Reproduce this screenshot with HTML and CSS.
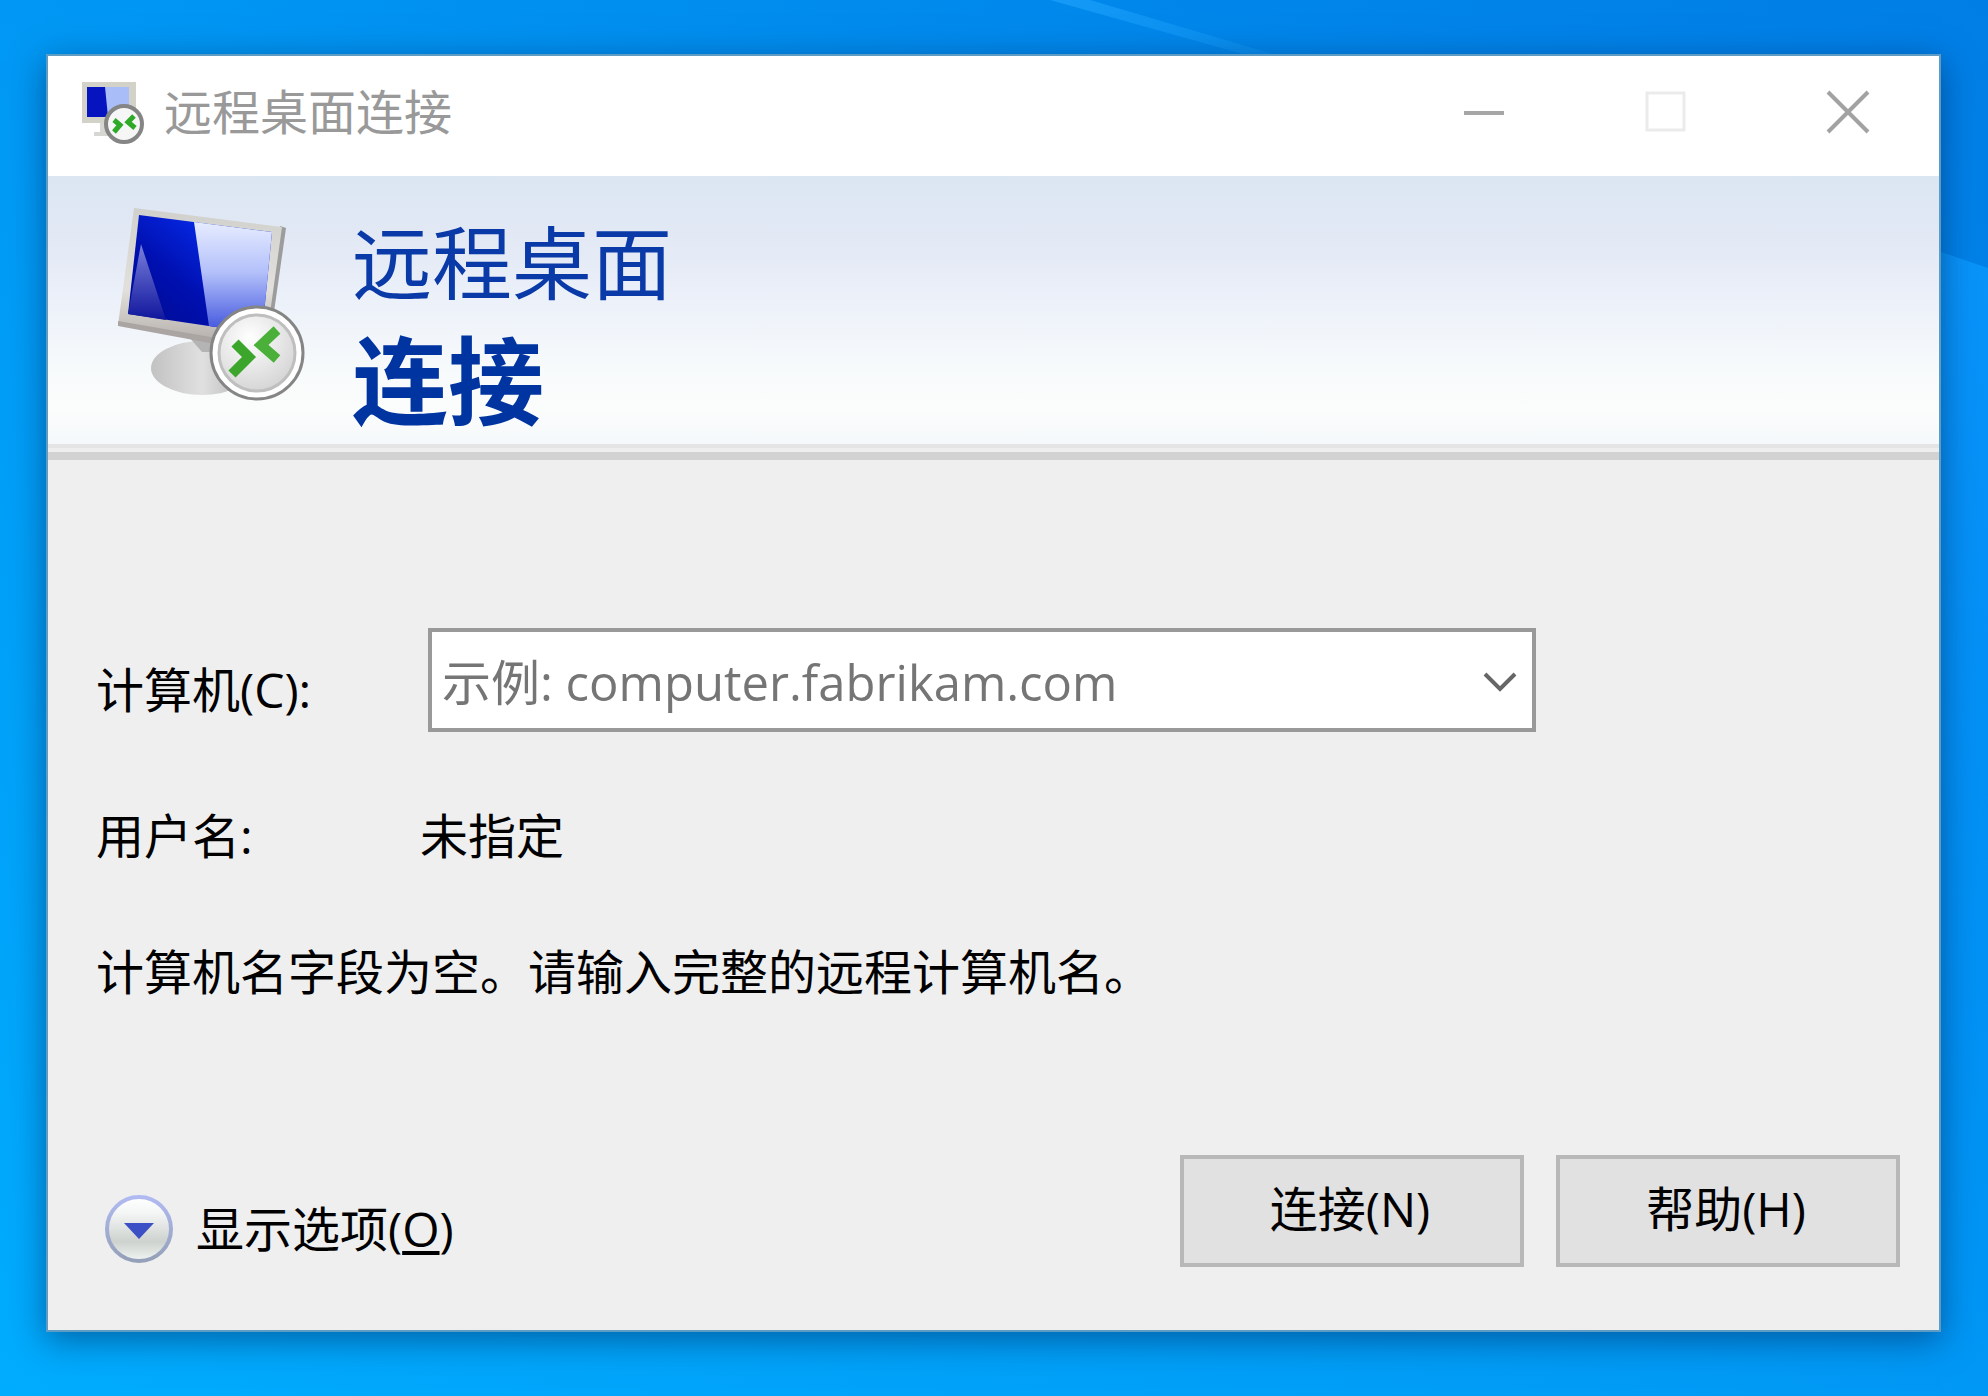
FILE: index.html
```html
<!DOCTYPE html>
<html lang="zh-CN">

<head>
    <meta charset="UTF-8">
    <meta name="viewport" content="width=device-width,initial-scale=1.0">
    <title>远程桌面连接</title>
    <link rel="stylesheet" href="styles.css">
</head>

<body>
    <!-- 桌面壁纸 -->
    <svg class="wallpaper" viewBox="0 0 1988 1396" preserveAspectRatio="none" aria-hidden="true">
        <defs>
            <linearGradient id="sky" x1="0" y1="1" x2="1" y2="0">
                <stop offset="0" stop-color="#00acfe" />
                <stop offset="0.5" stop-color="#0098f4" />
                <stop offset="0.8" stop-color="#0086ea" />
                <stop offset="1" stop-color="#007ee6" />
            </linearGradient>
            <linearGradient id="beam" x1="0" y1="0" x2="0" y2="1">
                <stop offset="0" stop-color="#0a96fc" stop-opacity="0.9" />
                <stop offset="1" stop-color="#0096ff" stop-opacity="0.1" />
            </linearGradient>
            <linearGradient id="ray" x1="0" y1="0" x2="1" y2="0">
                <stop offset="0" stop-color="#1ea2fc" stop-opacity="0.7" />
                <stop offset="1" stop-color="#1ea2fc" stop-opacity="0.2" />
            </linearGradient>
        </defs>
        <rect width="1988" height="1396" fill="url(#sky)" />
        <path d="M1900 238L1988 268V1396H1900Z" fill="url(#beam)" />
        <path d="M1050 0h40l190 56h-30z" fill="url(#ray)" />
    </svg>

    <main class="window">
        <!-- 标题栏 -->
        <header class="titlebar">
            <svg class="titlebar_icon" viewBox="0 0 64 64" aria-hidden="true">
                <rect x="2" y="2" width="54" height="41" fill="#d2d2c8" />
                <path d="M20 43h20v7h6v6H14v-4h6z" fill="#d6d6d2" />
                <rect x="7" y="7" width="42" height="30" fill="#a9bdf8" />
                <path d="M7 7h18l3 30H7z" fill="#0614c0" />
                <circle cx="44" cy="44" r="18" fill="#f6f6f6" stroke="#858585" stroke-width="4" />
                <path d="M34 40l6 5-6 7M54 36l-6 6 7 6" fill="none" stroke="#2eaa28" stroke-width="5" />
            </svg>
            <span class="titlebar_text">远程桌面连接</span>
            <div class="titlebar_buttons">
                <button type="button" aria-label="最小化">
                    <svg viewBox="0 0 44 44"><path d="M2 23h40" stroke="#a6a6a6" stroke-width="4" /></svg>
                </button>
                <button type="button" aria-label="最大化" disabled>
                    <svg viewBox="0 0 44 44"><rect x="3" y="3" width="37" height="37" fill="none" stroke="#ebebeb" stroke-width="3" /></svg>
                </button>
                <button type="button" aria-label="关闭">
                    <svg viewBox="0 0 44 44"><path d="M2 2l40 40M42 2L2 42" stroke="#a2a2a2" stroke-width="4" /></svg>
                </button>
            </div>
        </header>

        <!-- 横幅 -->
        <section class="banner">
            <svg class="banner_icon" viewBox="0 0 190 196" aria-hidden="true">
                <defs>
                    <linearGradient id="screen" x1="0" y1="1" x2="1" y2="0">
                        <stop offset="0" stop-color="#000a8c" />
                        <stop offset="0.4" stop-color="#0010b0" />
                        <stop offset="0.7" stop-color="#0526e0" />
                        <stop offset="1" stop-color="#0010a8" />
                    </linearGradient>
                    <linearGradient id="gloss" x1="0" y1="0" x2="0" y2="1">
                        <stop offset="0" stop-color="#e6ecff" />
                        <stop offset="0.45" stop-color="#b3c0fa" />
                        <stop offset="1" stop-color="#3c50dc" />
                    </linearGradient>
                    <linearGradient id="shine" x1="0" y1="0" x2="0" y2="1">
                        <stop offset="0" stop-color="#7a80dc" />
                        <stop offset="1" stop-color="#10169c" />
                    </linearGradient>
                    <linearGradient id="frame" x1="0" y1="0" x2="0" y2="1">
                        <stop offset="0" stop-color="#d0d0cc" />
                        <stop offset="0.6" stop-color="#e2e0dc" />
                        <stop offset="1" stop-color="#b4aeaa" />
                    </linearGradient>
                    <linearGradient id="base" x1="0" y1="0" x2="1" y2="0">
                        <stop offset="0" stop-color="#c2c2c2" />
                        <stop offset="0.5" stop-color="#e0e0e0" />
                        <stop offset="1" stop-color="#b0b0b0" />
                    </linearGradient>
                    <radialGradient id="badge" cx="0.4" cy="0.3" r="0.7">
                        <stop offset="0" stop-color="#ffffff" />
                        <stop offset="1" stop-color="#d6d6d6" />
                    </radialGradient>
                </defs>
                <ellipse cx="86" cy="162" rx="51" ry="27" fill="url(#base)" />
                <path d="M72 130l38 6v10H86z" fill="#b4b4b4" />
                <path d="M164 20l6 2-12 84-8-4z" fill="#9c9c9c" />
                <path d="M18 2L166 21 152 122 110 138 2 119z" fill="url(#frame)" />
                <path d="M2 115l110 19-2 6L2 120z" fill="#aaa4a2" />
                <path d="M23 9L156 26 146 128 12 108z" fill="url(#screen)" />
                <path d="M78 16L156 26 146 128 93 120z" fill="url(#gloss)" />
                <path d="M25 38L50 114 12 108z" fill="url(#shine)" />
                <circle cx="141" cy="147" r="46" fill="#ffffff" stroke="#858585" stroke-width="3" />
                <circle cx="141" cy="147" r="38" fill="url(#badge)" stroke="#bfbfbf" stroke-width="3" />
                <path d="M119 137l14 14-17 17" fill="none" stroke="#3ba52c" stroke-width="10" />
                <path d="M161 124l-16 15 16 14" fill="none" stroke="#4ab03a" stroke-width="10" />
            </svg>
            <h1 class="banner_title">
                <span>远程桌面</span>
                <strong>连接</strong>
            </h1>
        </section>

        <!-- 连接表单 -->
        <form class="content">
            <div class="fields">
                <label class="computer_label" for="computer">计算机(C):</label>
                <div class="combo">
                    <input id="computer" type="text" placeholder="示例: computer.fabrikam.com">
                    <button type="button" aria-label="打开列表">
                        <svg viewBox="0 0 36 22"><path d="M3 3l15 15L33 3" fill="none" stroke="#666" stroke-width="4" /></svg>
                    </button>
                </div>
                <span>用户名:</span>
                <span>未指定</span>
            </div>
            <p class="hint">计算机名字段为空。请输入完整的远程计算机名。</p>

            <div class="actions">
                <button type="button" class="options">
                    <svg viewBox="0 0 70 70" aria-hidden="true">
                        <defs>
                            <linearGradient id="ball" x1="0" y1="0" x2="0" y2="1">
                                <stop offset="0" stop-color="#ffffff" />
                                <stop offset="0.25" stop-color="#f4f6f6" />
                                <stop offset="0.7" stop-color="#cdd2ce" />
                                <stop offset="1" stop-color="#f2f6f4" />
                            </linearGradient>
                            <linearGradient id="rim" x1="0" y1="0" x2="0" y2="1">
                                <stop offset="0" stop-color="#b0baf2" />
                                <stop offset="1" stop-color="#94a0b8" />
                            </linearGradient>
                        </defs>
                        <circle cx="35" cy="35" r="32" fill="url(#ball)" stroke="url(#rim)" stroke-width="4" />
                        <path d="M20 29h30L35 45z" fill="#3a50c4" />
                    </svg>
                    <span>显示选项(<u>O</u>)</span>
                </button>
                <button type="submit" class="btn">连接(N)</button>
                <button type="button" class="btn">帮助(H)</button>
            </div>
        </form>
    </main>
</body>

</html>
```

FILE: styles.css
```css
* {
    padding: 0;
    margin: 0;
    box-sizing: border-box;
}

body {
    display: flex;
    min-height: 100vh;
    padding: 54px 47px 64px 46px;
    background-color: #0096f2;
    font-family: "Open Sans", "Noto Sans CJK SC", sans-serif;
    font-size: 48px;
    line-height: 64px;
    color: #000000;
}

button,
input {
    font: inherit;
    color: inherit;
    border: none;
    background: none;
}

svg {
    display: block;
}

.wallpaper {
    position: absolute;
    top: 0;
    left: 0;
    width: 100%;
    height: 100%;
    z-index: -1;
}

.window {
    flex: 1;
    display: flex;
    flex-direction: column;
    border: 2px solid #5f9cc4;
    background-color: #efefef;
    box-shadow: 0 8px 32px rgba(0, 30, 80, 0.5);
}

/* 标题栏 */
.titlebar {
    display: flex;
    align-items: center;
    height: 120px;
    padding: 0 0 8px 32px;
    background-color: #ffffff;
    color: #999999;
}

.titlebar_icon {
    width: 64px;
    height: 64px;
}

.titlebar_text {
    flex: 1;
    margin-left: 20px;
}

.titlebar_buttons {
    display: flex;
}

.titlebar_buttons button {
    display: flex;
    align-items: center;
    justify-content: center;
    width: 182px;
    height: 112px;
}

.titlebar_buttons svg {
    width: 44px;
    height: 44px;
}

/* 横幅 */
.banner {
    display: flex;
    align-items: flex-start;
    gap: 46px;
    height: 284px;
    padding: 30px 0 0 68px;
    background: linear-gradient(#dbe6f3, #e3e9f5 25%, #edf2fa 48%, #f8fbfb 72%, #fbfcfc 85%, #f4f8fb);
    border-bottom: 8px solid #d2d2d2;
    box-shadow: inset 0 -4px #eeeeee, inset 0 -8px #e4e4e4;
}

.banner_icon {
    width: 190px;
    height: 196px;
}

.banner_title {
    font-weight: 400;
    font-size: 80px;
    line-height: 112px;
    color: #0a3aa8;
}

.banner_title span,
.banner_title strong {
    display: block;
}

.banner_title strong {
    font-size: 96px;
    line-height: 124px;
    color: #0034a0;
}

/* 表单 */
.content {
    flex: 1;
    display: flex;
    flex-direction: column;
    padding: 168px 39px 63px 48px;
}

.fields {
    display: grid;
    grid-template-columns: 324px 1fr;
    row-gap: 72px;
    align-items: end;
}

.computer_label {
    line-height: 84px;
}

.combo {
    display: flex;
    width: 1108px;
    max-width: 100%;
    height: 104px;
    margin-left: 8px;
    border: 4px solid #999999;
    background-color: #ffffff;
}

.combo input {
    flex: 1;
    min-width: 0;
    padding: 4px 0 0 10px;
    outline: none;
    font-size: 49px;
}

.combo input::placeholder {
    color: #757575;
    opacity: 1;
}

.combo button {
    display: flex;
    align-items: center;
    justify-content: center;
    width: 64px;
    padding-top: 4px;
}

.combo svg {
    width: 36px;
    height: 22px;
}

.hint {
    margin-top: 72px;
}

.actions {
    display: flex;
    align-items: flex-end;
    gap: 32px;
    margin-top: auto;
}

.options {
    display: flex;
    align-items: center;
    gap: 22px;
    margin-right: auto;
    padding: 0 0 3px 8px;
}

.options svg {
    width: 70px;
    height: 70px;
}

.options u {
    text-decoration-thickness: 4px;
    text-underline-offset: 4px;
}

.btn {
    width: 344px;
    height: 112px;
    padding: 0 4px 4px 0;
    border: 4px solid #b8b8b8;
    background-color: #e1e1e1;
}
```
